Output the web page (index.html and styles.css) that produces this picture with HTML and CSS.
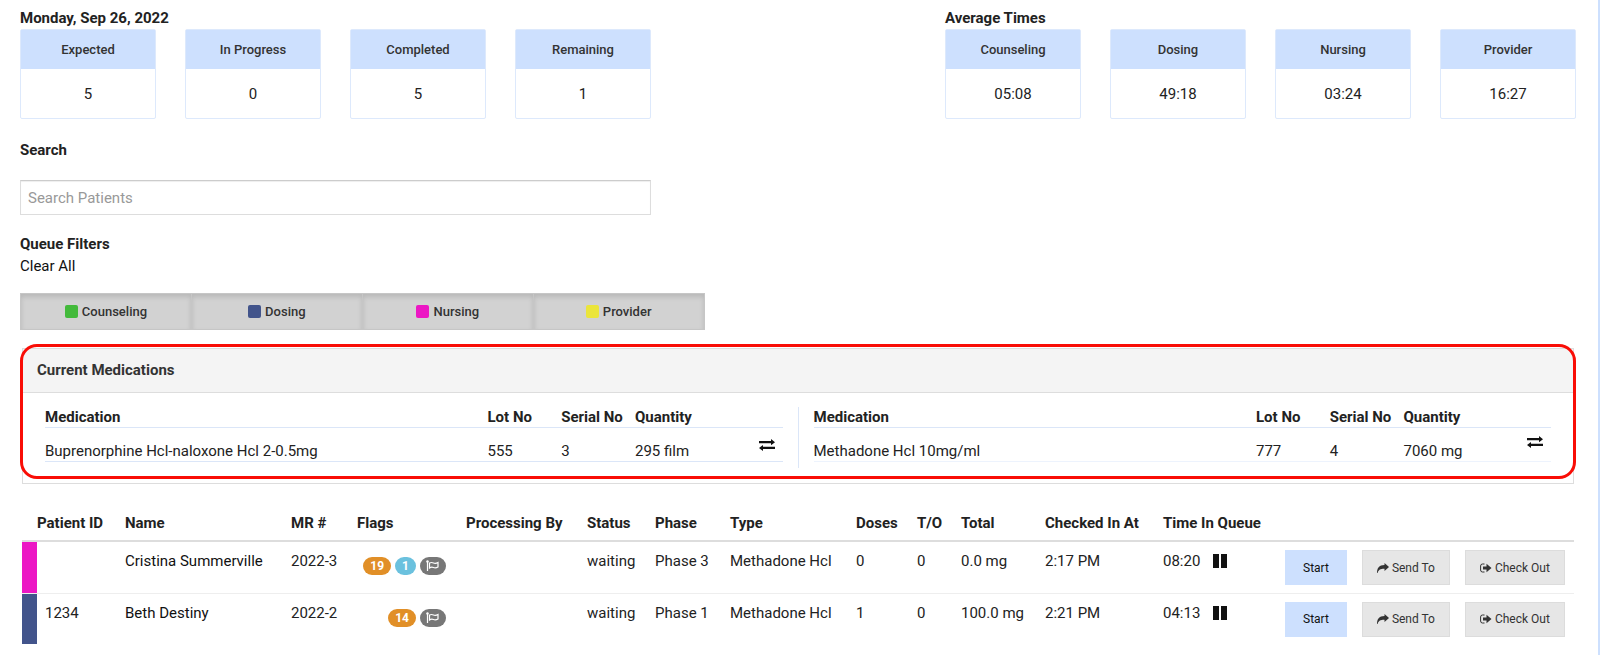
FILE: index.html
```html
<!DOCTYPE html>
<html lang="en">
<head>
<meta charset="utf-8">
<meta name="viewport" content="width=device-width, initial-scale=1">
<title>Patient Queue</title>
<link rel="stylesheet" href="styles.css">
</head>
<body>
<svg class="sprite" aria-hidden="true">
  <symbol id="swap" viewBox="0 0 16 12"><path d="M0 2h12V0l4 3.200-4 3V4.200H0zM16 7.800H4V6L0 9l4 3v-2h12z"/></symbol>
  <symbol id="share" viewBox="0 0 12 10"><path d="M7.500 0L12 4 7.500 8V5.800C4 5.700 1.500 6.500.6 10H0C0 5 2 2 7.500 2z"/></symbol>
  <symbol id="exit" viewBox="0 0 12 10"><path d="M4.500 1H2.500Q.6 1 .6 3v4q0 2 1.900 2h2" fill="none" stroke="currentColor"/><path d="M3 3.500h3.500V.8L11.500 5 6.500 9.200V6.500H3z"/></symbol>
  <symbol id="pause" viewBox="0 0 14 14"><path d="M0 0h6v14H0zM8 0h6v14H8z"/></symbol>
  <symbol id="flag" viewBox="0 0 14 12"><path d="M1.500 1v10M3.500 3q2-1 4 0t4.500-.5v4.500q-2.500 1.500-4.500.5t-4 .5z" fill="none" stroke="currentColor" stroke-width="1.200"/><circle cx="1.500" cy="1.500" r="1.200"/></symbol>
</svg>
<main class="page">
  <div class="summary">
    <section class="group">
      <h2 class="title">Monday, Sep 26, 2022</h2>
      <div class="cards">
        <div class="card"><h3 class="card-head">Expected</h3><p class="card-value">5</p></div>
        <div class="card"><h3 class="card-head">In Progress</h3><p class="card-value">0</p></div>
        <div class="card"><h3 class="card-head">Completed</h3><p class="card-value">5</p></div>
        <div class="card"><h3 class="card-head">Remaining</h3><p class="card-value">1</p></div>
      </div>
    </section>
    <section class="group">
      <h2 class="title">Average Times</h2>
      <div class="cards">
        <div class="card"><h3 class="card-head">Counseling</h3><p class="card-value">05:08</p></div>
        <div class="card"><h3 class="card-head">Dosing</h3><p class="card-value">49:18</p></div>
        <div class="card"><h3 class="card-head">Nursing</h3><p class="card-value">03:24</p></div>
        <div class="card"><h3 class="card-head">Provider</h3><p class="card-value">16:27</p></div>
      </div>
    </section>
  </div>

  <div class="search">
    <label class="title" for="search">Search</label>
    <input class="search-box" id="search" type="text" placeholder="Search Patients">
  </div>

  <section class="filters">
    <h2 class="title">Queue Filters</h2>
    <a class="clear" href="#">Clear All</a>
    <div class="filter-bar">
      <button class="filter" type="button"><span class="swatch green"></span>Counseling</button>
      <button class="filter" type="button"><span class="swatch navy"></span>Dosing</button>
      <button class="filter" type="button"><span class="swatch pink"></span>Nursing</button>
      <button class="filter" type="button"><span class="swatch yellow"></span>Provider</button>
    </div>
  </section>

  <section class="panel">
    <h2 class="panel-head">Current Medications</h2>
    <div class="meds">
      <div class="med">
        <table class="med-table">
          <colgroup><col class="m-name"><col class="m-cell"><col class="m-cell"><col class="m-qty"><col class="m-icon"></colgroup>
          <thead><tr><th>Medication</th><th>Lot No</th><th>Serial No</th><th>Quantity</th><th></th></tr></thead>
          <tbody><tr><td>Buprenorphine Hcl-naloxone Hcl 2-0.5mg</td><td>555</td><td>3</td><td>295 film</td><td class="swap-cell"><button class="icon-btn" type="button" aria-label="Swap"><svg class="swap"><use href="#swap"/></svg></button></td></tr></tbody>
        </table>
      </div>
      <div class="med">
        <table class="med-table last">
          <colgroup><col class="m-name"><col class="m-cell"><col class="m-cell"><col class="m-qty"><col class="m-icon"></colgroup>
          <thead><tr><th>Medication</th><th>Lot No</th><th>Serial No</th><th>Quantity</th><th></th></tr></thead>
          <tbody><tr><td>Methadone Hcl 10mg/ml</td><td>777</td><td>4</td><td>7060 mg</td><td class="swap-cell"><button class="icon-btn" type="button" aria-label="Swap"><svg class="swap"><use href="#swap"/></svg></button></td></tr></tbody>
        </table>
      </div>
    </div>
  </section>

  <table class="queue">
    <colgroup><col class="q-bar"><col class="q-id"><col class="q-name"><col class="q-mr"><col class="q-flags"><col class="q-proc"><col class="q-status"><col class="q-phase"><col class="q-type"><col class="q-doses"><col class="q-to"><col class="q-total"><col class="q-in"><col class="q-time"><col class="q-actions"></colgroup>
    <thead>
      <tr><th></th><th>Patient ID</th><th>Name</th><th>MR #</th><th>Flags</th><th>Processing By</th><th>Status</th><th>Phase</th><th>Type</th><th>Doses</th><th>T/O</th><th>Total</th><th>Checked In At</th><th>Time In Queue</th><th></th></tr>
    </thead>
    <tbody>
      <tr>
        <td class="pink"></td><td class="pid"></td><td><a class="patient" href="#">Cristina Summerville</a></td><td>2022-3</td>
        <td><div class="badges"><span class="badge orange">19</span><span class="badge sky">1</span><span class="badge grey"><svg class="flag"><use href="#flag"/></svg></span></div></td>
        <td></td><td>waiting</td><td>Phase 3</td><td>Methadone Hcl</td><td>0</td><td>0</td><td>0.0 mg</td><td>2:17 PM</td>
        <td><div class="time">08:20<button class="icon-btn" type="button" aria-label="Pause"><svg class="pause"><use href="#pause"/></svg></button></div></td>
        <td><div class="actions"><button class="btn start" type="button">Start</button><button class="btn" type="button"><svg class="ico"><use href="#share"/></svg>Send To</button><button class="btn" type="button"><svg class="ico"><use href="#exit"/></svg>Check Out</button></div></td>
      </tr>
      <tr>
        <td class="navy"></td><td class="pid">1234</td><td><a class="patient" href="#">Beth Destiny</a></td><td>2022-2</td>
        <td><div class="badges"><span class="badge orange">14</span><span class="badge grey"><svg class="flag"><use href="#flag"/></svg></span></div></td>
        <td></td><td>waiting</td><td>Phase 1</td><td>Methadone Hcl</td><td>1</td><td>0</td><td>100.0 mg</td><td>2:21 PM</td>
        <td><div class="time">04:13<button class="icon-btn" type="button" aria-label="Pause"><svg class="pause"><use href="#pause"/></svg></button></div></td>
        <td><div class="actions"><button class="btn start" type="button">Start</button><button class="btn" type="button"><svg class="ico"><use href="#share"/></svg>Send To</button><button class="btn" type="button"><svg class="ico"><use href="#exit"/></svg>Check Out</button></div></td>
      </tr>
    </tbody>
  </table>
</main>
</body>
</html>
```
FILE: styles.css
```css
* { box-sizing: border-box; }
body { margin: 0; background: #fff; color: #222; font: 15px/22px Roboto, "Liberation Sans", sans-serif; }
h2, h3, p { margin: 0; font-size: inherit; }
button, input { font: inherit; color: inherit; }
svg { display: block; fill: currentColor; }
.sprite { display: none; }
.page { min-height: 100vh; padding: 7px 22px 0 20px; border-right: 2px solid #cde0fe; }
.title { display: block; font-weight: 700; }

.summary { display: flex; justify-content: space-between; }
.group { width: 41%; max-width: 631px; }
.cards { display: grid; grid-template-columns: repeat(4, 1fr); gap: 29px; }
.card { border: 1px solid #dde9fc; border-radius: 2px; text-align: center; }
.card-head { background: #cde0fe; font-size: 13px; font-weight: 500; line-height: 39px; color: #333; }
.card-value { padding-top: 2px; line-height: 47px; }

.search { margin-top: 20px; width: 41%; max-width: 631px; }
.search-box { display: block; width: 100%; height: 35px; margin-top: 19px; padding: 0 7px; border: 1px solid #ddd; border-top-color: #ccc; box-shadow: inset 0 1px 1px #eee; background: #fff; }
.search-box::placeholder { color: #999; opacity: 1; }

.filters { margin-top: 18px; }
.clear { color: #111; text-decoration: none; }
.filter-bar { display: flex; width: 44%; margin-top: 16px; }
.filter { flex: 1; display: flex; align-items: center; justify-content: center; gap: 4px; height: 37px; padding: 0; border: 1px solid #c6c6c6; border-left-width: 0; background: #d2d2d2; box-shadow: inset 0 3px 5px rgba(0, 0, 0, .125); font-size: 13px; font-weight: 500; color: #333; }
.filter:first-child { border-left-width: 1px; }
.swatch { width: 13px; height: 13px; border-radius: 2px; }
.green { background: #43ba3b; }
.navy { background: #42548b; }
.pink { background: #ec17c4; }
.yellow { background: #ebe53b; }

.panel { position: relative; margin: 18px 2px 0; border: 1px solid #ddd; }
.panel::after { content: ""; position: absolute; inset: -5px -3px 4px; border: 3px solid #f90d06; border-radius: 17px; pointer-events: none; }
.panel-head { padding: 10px 14px 11px; background: #f4f4f4; border-bottom: 1px solid #ddd; font-weight: 700; color: #333; }
.meds { display: flex; padding: 14px 7px 15px; }
.med { flex: 1; padding: 0 15px 6px; }
.med + .med { border-left: 1px solid #dbe6f8; }
.med-table, .queue { width: 100%; border-collapse: collapse; table-layout: fixed; }
.med-table th, .queue th { padding: 0; text-align: left; font-weight: 700; white-space: nowrap; }
.med-table th { height: 20px; line-height: 20px; border-bottom: 1px solid #dbe6f8; }
.med-table td { height: 34px; padding: 13px 0 0; line-height: 20px; border-bottom: 1px solid #dbe6f8; vertical-align: top; }
.med-table.last td { border-bottom-color: #edf3fd; }
.m-name { width: 60%; }
.m-cell, .m-qty, .m-icon { width: 10%; }
.icon-btn { padding: 0; border: 0; background: none; color: #111; }
.swap { width: 16px; height: 12px; }
.med-table .swap-cell { padding: 11px 8px 0 0; }
.med-table.last .swap-cell { padding-top: 8px; }
.swap-cell .icon-btn { display: block; margin-left: auto; }

.queue { width: calc(100% - 4px); margin: 21px 2px 0; }
.queue th { height: 36px; border-bottom: 2px solid #ddd; }
.queue td { height: 52px; padding: 8px 0 0; vertical-align: top; white-space: nowrap; border-bottom: 1px solid #eee; }
.queue tbody tr:last-child td { height: 51px; border-bottom: 0; }
.queue .pid { padding-left: 8px; }
.q-bar { width: 15px; }
.q-id { width: 88px; }
.q-name { width: 166px; }
.q-mr { width: 66px; }
.q-flags { width: 109px; }
.q-proc { width: 121px; }
.q-status { width: 68px; }
.q-phase { width: 75px; }
.q-type { width: 126px; }
.q-doses { width: 61px; }
.q-to { width: 44px; }
.q-total { width: 84px; }
.q-in { width: 118px; }
.q-time { width: 122px; }
.q-actions { width: 289px; }
.patient { color: #111; text-decoration: none; }
.badges { display: flex; justify-content: flex-end; gap: 4px; padding: 7px 20px 0 0; }
.badge { display: flex; align-items: center; height: 18px; padding: 0 7px; border-radius: 9px; color: #fff; font-size: 12px; font-weight: 700; line-height: 18px; }
.badge.grey { padding: 0 6px; }
.orange { background: #e18f27; }
.sky { background: #6bc1de; }
.grey { background: #777; }
.flag { width: 14px; height: 12px; }
.time { display: flex; align-items: center; gap: 13px; }
.pause { width: 14px; height: 14px; }
.actions { display: flex; gap: 15px; }
.btn { display: flex; align-items: center; justify-content: center; gap: 3px; height: 35px; padding: 0 14px; border: 1px solid #dcdcdc; background: #e6e6e6; color: #333; font-size: 12px; }
.btn.start { padding: 0 17px; background: #cde0fe; border-color: #cde0fe; color: #111; }
.ico { width: 12px; height: 10px; }
```
